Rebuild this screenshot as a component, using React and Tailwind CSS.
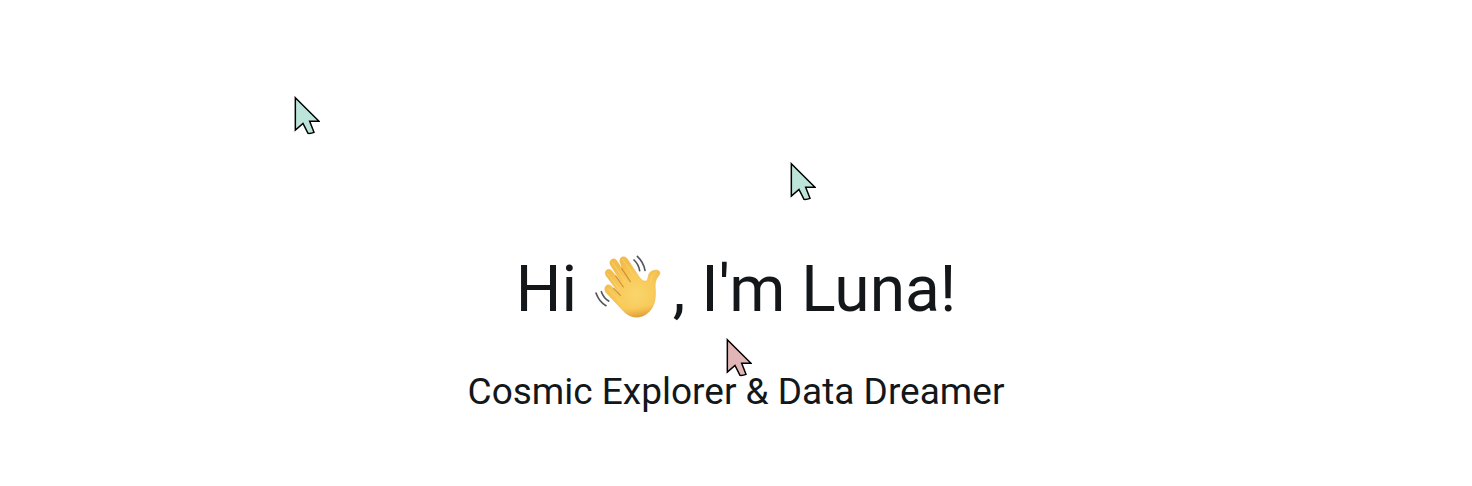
function Cursor({ className }) {
  return (
    <svg
      aria-hidden="true"
      viewBox="0 0 78 117"
      className={`pointer-events-none absolute h-[39px] w-[26px] ${className}`}
    >
      <path
        d="M4 5L75 76H47L60 109Q51 113 42 112L27 82L4 102Z"
        fill="currentColor"
        stroke="#000"
        strokeWidth="4.5"
        strokeLinejoin="miter"
      />
    </svg>
  );
}

const HAND =
  "M78 58C71 47 86 33 96 43L114 69L107 50C103 34 118 28 128 38L163 91C168 99 174 105 181 106C188 108 190 100 191 94C193 80 202 74 215 73C226 73 231 82 223 91C214 101 212 112 213 126C214 142 214 156 211 168C206 189 190 208 169 213C149 219 132 210 119 198L66 142C54 128 67 111 80 120L104 143L65 90C57 78 70 65 81 74L108 106Z";

function WavingHand() {
  return (
    <svg
      role="img"
      aria-label="Waving hand"
      viewBox="26 22 204 198"
      className="inline-block h-[66px] w-[68px]"
    >
      <defs>
        <radialGradient id="skin" gradientUnits="userSpaceOnUse" cx="155" cy="145" r="95">
          <stop offset="0" stopColor="#fad56c" />
          <stop offset="0.55" stopColor="#f8cb5a" />
          <stop offset="0.85" stopColor="#f5c250" />
          <stop offset="1" stopColor="#f3bd4c" />
        </radialGradient>
        <linearGradient id="shade" gradientUnits="userSpaceOnUse" x1="140" y1="90" x2="160" y2="215">
          <stop offset="0.75" stopColor="#e29a2b" stopOpacity="0" />
          <stop offset="1" stopColor="#c98328" stopOpacity="0.6" />
        </linearGradient>
      </defs>
      <path d={HAND} fill="url(#skin)" />
      <path d={HAND} fill="url(#shade)" stroke="#e5ab45" strokeWidth="1" />
      <g fill="none" strokeLinecap="round">
        <g stroke="#cf9038" strokeWidth="3.5">
          <path d="M88 128L108 149" />
          <path d="M94 91L117 124" />
          <path d="M112 68L138 108" />
        </g>
        <g stroke="#fde184" strokeWidth="3" opacity="0.5">
          <path d="M70 128L112 170" />
          <path d="M70 84L107 134" />
          <path d="M84 50L124 110" />
          <path d="M116 42L149 91" />
          <path d="M215 80Q202 86 199 108" />
        </g>
        <g stroke="#535659" strokeWidth="5">
          <path d="M149 43Q163 56 166 75" />
          <path d="M159 32Q178 50 182 74" />
          <path d="M35 142Q44 168 65 180" />
          <path d="M51 138Q58 157 73 166" />
        </g>
      </g>
    </svg>
  );
}

export default function App() {
  return (
    <main className="relative flex min-h-screen flex-col items-center bg-white px-6 pt-[253px] pb-16 font-['Roboto',sans-serif] text-[#14171a]">
      <h1 className="flex items-center text-[64px] leading-[72px]">
        <span className="whitespace-pre">Hi </span>
        <span className="mr-3 flex items-center pb-2">
          <WavingHand />
        </span>
        <span className="whitespace-pre">, I'm Luna!</span>
      </h1>
      <p className="mt-11 text-center text-[37px] leading-[42px]">
        Cosmic Explorer &amp; Data Dreamer
      </p>
      <Cursor className="top-[96px] left-[20%] text-[#bce4da]" />
      <Cursor className="top-[162px] left-[53.7%] text-[#bce4d8]" />
      <Cursor className="top-[338px] left-[49.35%] text-[#e0b5b5]" />
    </main>
  );
}
